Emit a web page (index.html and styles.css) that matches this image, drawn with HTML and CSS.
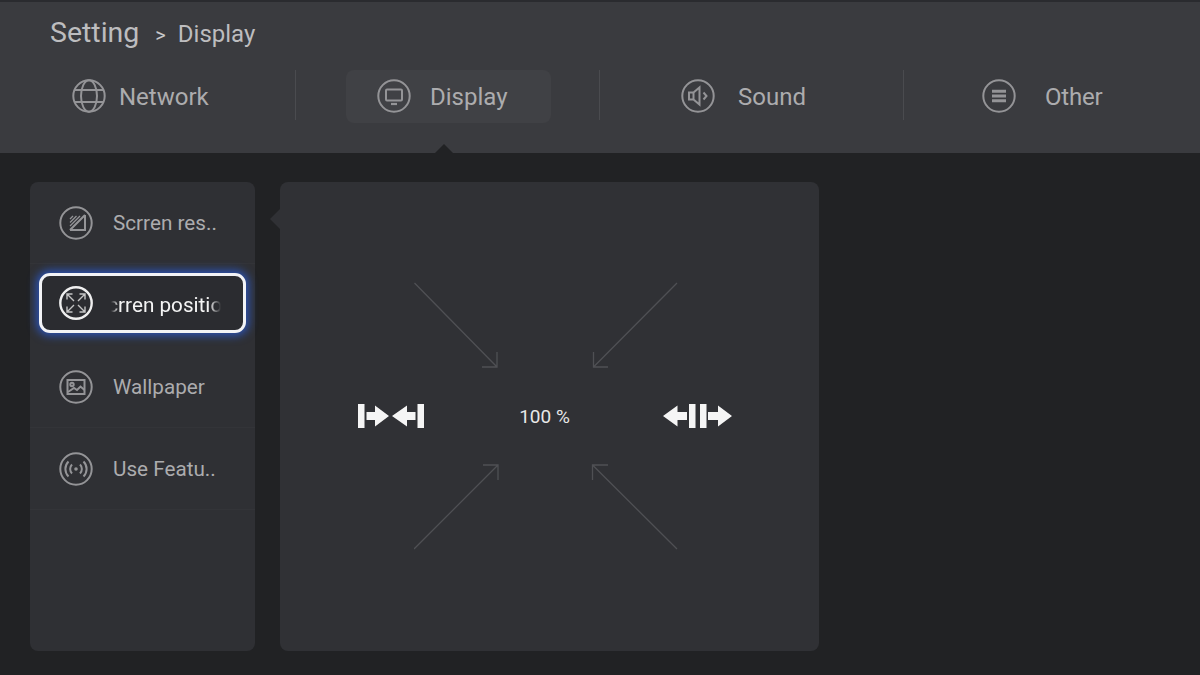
FILE: index.html
```html
<!DOCTYPE html>
<html lang="en">
<head>
    <meta charset="UTF-8">
    <title>Setting - Display</title>
    <link rel="stylesheet" href="styles.css">
</head>
<body>

    <header class="top">
        <div class="crumbs">
            <span class="crumb-main">Setting</span>
            <span class="crumb-sep">&gt;</span>
            <span class="crumb-sub">Display</span>
        </div>
        <nav class="tabs">
            <div class="tab tab-network">
                <svg class="ring" viewBox="0 0 34 34">
                    <circle cx="17" cy="17" r="15.700"/>
                    <ellipse cx="17" cy="17" rx="8" ry="15.700"/>
                    <path d="M3 11h28M3 23h28"/>
                </svg>
                <span class="tab-label">Network</span>
            </div>
            <div class="tab tab-display">
                <div class="pill">
                    <svg class="ring" viewBox="0 0 34 34">
                        <circle cx="17" cy="17" r="15.700"/>
                        <rect x="9" y="10.500" width="16" height="11" rx="1"/>
                        <path d="M14 25h6" stroke-width="2.200"/>
                    </svg>
                    <span class="tab-label">Display</span>
                </div>
            </div>
            <div class="tab tab-sound">
                <svg class="ring" viewBox="0 0 34 34">
                    <circle cx="17" cy="17" r="15.700"/>
                    <path d="M8 13.500h4.500l6-5v17l-6-5H8zM12.500 13.500v7M22.500 13.500l3 3.500-3 3.500"/>
                </svg>
                <span class="tab-label">Sound</span>
            </div>
            <div class="tab tab-other">
                <svg class="ring" viewBox="0 0 34 34">
                    <circle cx="17" cy="17" r="15.700"/>
                    <path d="M10 12.300h14M10 17h14M10 21.700h14" stroke-width="3"/>
                </svg>
                <span class="tab-label">Other</span>
            </div>
        </nav>
    </header>

    <main class="content">
        <aside class="menu">
            <div class="menu-item">
                <svg class="ring" viewBox="0 0 34 34">
                    <circle cx="17" cy="17" r="15.700"/>
                    <path d="M26 9v15H11M11 24L26 9"/>
                    <path d="M11 13l3-3M11 16.500l6.500-6.500M11 20l10-10" stroke-width="1.300"/>
                </svg>
                <span>Scrren res..</span>
            </div>
            <div class="menu-item is-focus">
                <svg class="ring" viewBox="0 0 34 34">
                    <circle cx="17" cy="17" r="15.700"/>
                    <path class="thin" d="M8 13.500V8h5.500M8 8l7 7M26 13.500V8h-5.500M26 8l-7 7M8 20.500V26h5.500M8 26l7-7M26 20.500V26h-5.500M26 26l-7-7"/>
                </svg>
                <div class="scroll-text"><span>Scrren position</span></div>
            </div>
            <div class="menu-item">
                <svg class="ring" viewBox="0 0 34 34">
                    <circle cx="17" cy="17" r="15.700"/>
                    <rect x="8.500" y="10" width="17" height="14"/>
                    <circle cx="13" cy="14.500" r="1.700"/>
                    <path d="M9 22l6-4 3 2 3.500-3.500 4 3.500"/>
                </svg>
                <span>Wallpaper</span>
            </div>
            <div class="menu-item">
                <svg class="ring" viewBox="0 0 34 34">
                    <circle cx="17" cy="17" r="15.700"/>
                    <path d="M9.500 9.500a10.600 10.600 0 0 0 0 15M24.500 9.500a10.600 10.600 0 0 1 0 15M13 12.500a6.400 6.400 0 0 0 0 9M21 12.500a6.400 6.400 0 0 1 0 9"/>
                    <circle class="dot" cx="17" cy="17" r="1.800"/>
                </svg>
                <span>Use Featu..</span>
            </div>
        </aside>

        <section class="panel">
            <svg class="corner-arrows" viewBox="0 0 264 86">
                <path d="M0.500 1L83 85M83 70v15H68"/>
                <path d="M263 1L179.500 85M179.500 70v15H194"/>
            </svg>
            <div class="scale-row">
                <svg class="scale-btn" width="66" height="24" viewBox="0 0 66 24">
                    <path d="M0 0h6.500v24H0zM8.500 8h8.500V1.500L31 12 17 22.500V16H8.500zM59.500 0H66v24h-6.500zM57.500 8H49V1.500L34 12l15 10.500V16h8.500z"/>
                </svg>
                <span class="scale-value">100 %</span>
                <svg class="scale-btn" width="69" height="24" viewBox="0 0 69 24">
                    <path d="M24 8h-9.500V1.500L0 12l14.500 10.500V16H24zM26 0h6.500v24H26zM37 0h6.500v24H37zM45 8h10V1.500L69 12 55 22.500V16H45z"/>
                </svg>
            </div>
            <svg class="corner-arrows" viewBox="0 0 264 86">
                <path d="M0 85L84 1M69 1h15v15"/>
                <path d="M263 85L178.500 1M178.500 16V1H194"/>
            </svg>
        </section>
    </main>

</body>
</html>
```

FILE: styles.css
```css
* {
    box-sizing: border-box;
}
html, body {
    height: 100%;
}
body {
    margin: 0;
    overflow: hidden;
    font-family: 'Roboto', sans-serif;
    background: #212224;
    color: #acacae;
}
.top {
    position: relative;
    height: 153px;
    background: #3a3b3f;
    border-top: 2px solid #2a2b2f;
}
.top::after {
    content: "";
    position: absolute;
    left: 435px;
    bottom: 0;
    border-left: 9px solid transparent;
    border-right: 9px solid transparent;
    border-bottom: 9px solid #212224;
}
.crumbs {
    display: flex;
    align-items: baseline;
    height: 68px;
    padding: 14px 0 0 50px;
    color: #bdbdbf;
}
.crumb-main {
    font-size: 28.500px;
}
.crumb-sep {
    margin-left: 16px;
    font-size: 20px;
    color: #c8c8ca;
}
.crumb-sub {
    margin-left: 12px;
    font-size: 24px;
}
.tabs {
    display: grid;
    grid-template-columns: 296px 304px 304px 296px;
    grid-template-rows: 50px;
    font-size: 24px;
}
.tab {
    display: flex;
    align-items: center;
    padding-top: 2px;
    border-right: 1px solid #4a4b4f;
}
.tab:last-child {
    border-right: none;
}
.tab-label {
    margin-top: 2px;
}
.tab-network {
    gap: 13px;
    padding-left: 72px;
}
.tab-display {
    padding-left: 50px;
}
.tab-sound {
    gap: 23px;
    padding-left: 81px;
}
.tab-other {
    gap: 29px;
    padding-left: 78px;
    letter-spacing: -0.2px;
}
.pill {
    display: flex;
    flex: none;
    align-items: center;
    gap: 19px;
    width: 205px;
    height: 53px;
    padding-left: 31px;
    background: #404145;
    border-radius: 8px;
}
.ring {
    flex: none;
    width: 34px;
    height: 34px;
    fill: none;
    stroke: #949497;
    stroke-width: 2;
}
.content {
    display: flex;
    gap: 25px;
    padding: 29px 0 0 30px;
}
.menu {
    width: 225px;
    height: 469px;
    background: #2f3034;
    border-radius: 8px;
    font-size: 20.700px;
}
.menu-item {
    display: flex;
    align-items: center;
    gap: 20px;
    height: 82px;
    padding-left: 29px;
    border-bottom: 1px solid #333438;
}
.menu-item.is-focus {
    gap: 18px;
    width: 207px;
    height: 60px;
    margin: 9px 9px 13px;
    padding-left: 17px;
    color: #f4f4f4;
    background: #2b2c30;
    border: 3px solid #f2f3f6;
    border-radius: 11px;
    box-shadow: 0 0 8px 3px #2c52b0;
}
.is-focus .ring {
    stroke: #efefef;
    stroke-width: 2.400;
}
.is-focus .ring .thin {
    stroke: #c4c4c4;
    stroke-width: 1.400;
}
.dot {
    fill: #949497;
    stroke: none;
}
.scroll-text {
    width: 110px;
    padding-top: 3px;
    overflow: hidden;
    white-space: nowrap;
    -webkit-mask-image: linear-gradient(to right, transparent 0, #000 8px, #000 98px, transparent 110px);
    mask-image: linear-gradient(to right, transparent 0, #000 8px, #000 98px, transparent 110px);
}
.scroll-text span {
    display: block;
    margin-left: -16px;
}
.panel {
    position: relative;
    width: 539px;
    height: 469px;
    padding: 100px 0 0 78px;
    background: #303135;
    border-radius: 8px;
}
.panel::before {
    content: "";
    position: absolute;
    left: -10px;
    top: 27px;
    border-top: 10px solid transparent;
    border-bottom: 10px solid transparent;
    border-right: 10px solid #303135;
}
.corner-arrows {
    display: block;
    width: 264px;
    height: 86px;
    margin-left: 56px;
    fill: none;
    stroke: #4f5054;
    stroke-width: 1.300;
}
.scale-row {
    display: flex;
    align-items: center;
    justify-content: space-between;
    width: 374px;
    height: 96px;
}
.scale-btn {
    fill: #f5f5f5;
}
.scale-value {
    margin-left: 2px;
    font-size: 19px;
    color: #e8e8e8;
}
```
